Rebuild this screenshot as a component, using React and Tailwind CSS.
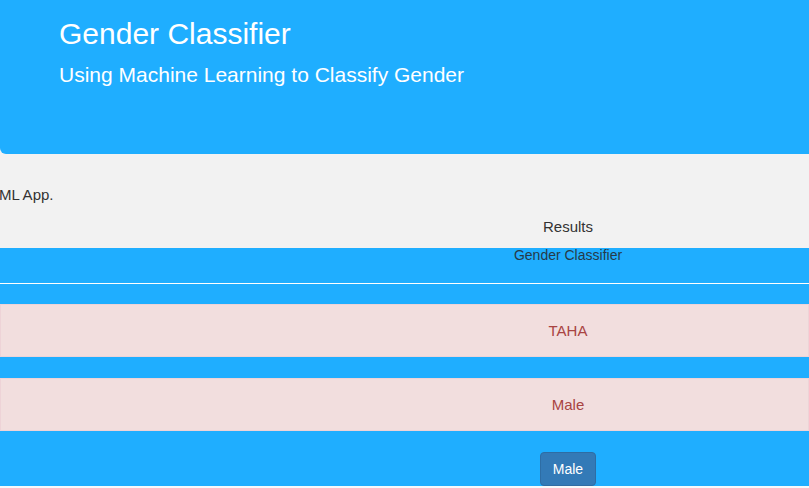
const App = () => {
    return (
        <div className="w-[809px] h-[488px] overflow-hidden bg-[#f5f9fb] font-['Liberation_Sans',Arial,sans-serif] text-[#333]">
            {/* jumbotron */}
            <div className="bg-[#f2f2f2]">
                <div className="h-[154px] bg-[#1faeff] rounded-bl-[6px] pl-[59px] pt-[16px] text-white">
                    <h1 className="text-[30px] leading-[36px]">Gender Classifier</h1>
                    <h3 className="text-[21px] leading-[24px] mt-[11px]">Using Machine Learning to Classify Gender</h3>
                </div>
            </div>

            {/* intro */}
            <div className="h-[94px] bg-[#f2f2f2] pt-[32px] text-[15px]">
                <p className="-ml-[1px] leading-[17px]">ML App.</p>
                <p className="pl-[327px] text-center text-[15px] leading-[18px] mt-[15px]">Results</p>
            </div>

            {/* results */}
            <div className="bg-[#1faeff] h-[238px]">
                <p className="pl-[327px] text-center text-[14px] leading-[14px] text-[#263a48]">Gender Classifier</p>
                <hr className="mt-[21px] border-t border-white" />

                <div className="mt-[20px] h-[53px] bg-[#f2dede] border border-[#eed3d7] flex items-center pl-[327px] pt-[2px]">
                    <span className="flex-1 text-center text-[15px] text-[#a94442]">TAHA</span>
                </div>
                <div className="mt-[21px] h-[53px] bg-[#f2dede] border border-[#eed3d7] flex items-center pl-[327px] pt-[2px]">
                    <span className="flex-1 text-center text-[15px] text-[#a94442]">Male</span>
                </div>

                <div className="mt-[21px] pl-[327px] flex justify-center">
                    <button className="h-[34px] w-[56px] rounded-[4px] bg-[#337ab7] border border-[#2e6da4] text-white text-[14px] pt-[1px]">
                        Male
                    </button>
                </div>
            </div>
        </div>
    );
};

export default App;
